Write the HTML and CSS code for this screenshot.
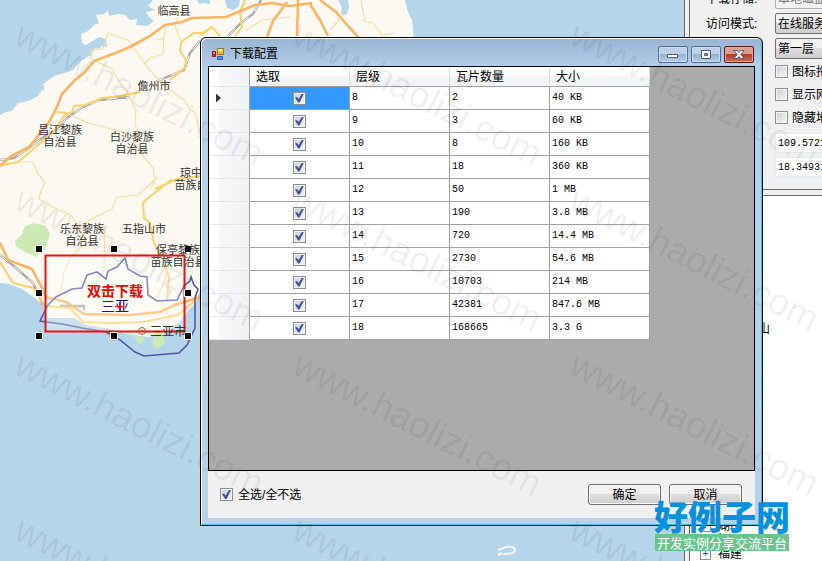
FILE: index.html
```html
<!DOCTYPE html>
<html lang="zh-CN">
<head>
<meta charset="utf-8">
<title>下载配置</title>
<link rel="stylesheet" href="styles.css">
</head>
<body>
<div class="app">
  <main class="map">
    <svg class="terrain" viewBox="0 0 684 561" preserveAspectRatio="xMinYMin slice" aria-hidden="true">
      <path fill="#fcf9f2" d="M0 115L6 112 12 111 18 103 28 101 38 96 42 90 43 84 54 76 65 73 73 70 80 62 92 54 96 45 107 47 106 39 99 37 91 42 86 45 82 43 81 34 88 31 94 25 99 23 96 15 104 14 108 10 109 16 118 14 125 15 130 20 137 19 136 25 147 26 154 21 149 17 146 12 155 10 148 6 153 0H405L408 12 412 20 414 40 410 120 260 290 200 290 196 302 188 311 181 320 167 333 148 337 126 334 112 329 85 325 75 318 47 318 44 306 36 299 22 289 9 284 0 283Z"/>
      <g fill="#b4d5ea">
        <path d="M197 0l2 4 5-1 6 1V0zM225 0l2 8 7 2 5-4 1-6zM338 0l4 7-1 7 5 1 3-7-1-8zM86 46l6-5 4-1 8 4-5 5zM40 88l4-3v6z"/>
      </g>
      <path fill="#cde9b6" d="M15 241l7-7 3-8 9-3 12 3 4 8-4 14-6 5-4 4-11-5-9-6z"/>
      <path fill="#cde9b6" d="M133 337l9-1 3 4-5 4zM153 340l3-10 6 1 3 12-8 6-5-4zM166 290l4-2 2 5-4 3z"/>
      <g fill="none" stroke="#aaa" stroke-width="2.400">
        <path d="M0 160L14 158 26 150 39 140 57 129 67 118 81 108 99 100 130 97M155 82l17-7 12-5 6-17 10-12M228 36l14-14 11-8 8-14M0 255l15 12 18 16 10 22M60 306h24v4"/>
        <path stroke="#fff" stroke-width="1" stroke-dasharray="10 8" d="M0 160L14 158 26 150 39 140 57 129 67 118 81 108 99 100 130 97M155 82l17-7 12-5 6-17 10-12M228 36l14-14 11-8 8-14M0 255l15 12 18 16 10 22"/>
      </g>
      <g fill="none" stroke="#f8dda0" stroke-width="1.200">
        <path d="M91 59V50l12-1 5-16 20 7 17 24 17 20 15 11 8 6 5 8 6 5 3 17 12 12M92 59l20 10 8 14 9 11 4 12 3 4-1 14 2 7-8 22M70 115l18 8 20 5 22 6 13 22 10 12 2 12-5 9M164 36l-1 18-13 4-6 6M166 25l-2 14-8 1M178 18l-3 8 5 14M21 162l12 0 5 12 7 8-4 9-2 8 16 9 16 7 6 10 7 11 1 8-14 12-7 16-4 27M76 229l17-11 19-9 5-12 21-2 11-10 9-8M105 225l-1 44-11 18 15 24M163 254l3 22-8 20 14 25M330 30l14-16M361 0l4 22 7 0 10 13 12-2M246 30l16-10 28-3"/>
      </g>
      <g fill="none" stroke="#fcd06a" stroke-width="2">
        <path d="M3 165l15-3 12-10 24-21 10-15 8-4 2-6 11-1 17-7 18-2 20-4M57 112l10 1M210 29l-7 4-9 0-13 9-1 9 6 9-1 8-15 12M155 189l20-9 9-2 26-3M172 179l-15 12-10 8-4 4 1 15 6 5 4 20 10 20 5 14-2 23M0 262l13 21 20 5 12 18 25 2 13 14 30 1 30-1 35-7 20-17M200 35l12-8 8 9M245 0l-5 12 2 15-7 9"/>
      </g>
      <g fill="none" stroke="#fbb463" stroke-width="2.600">
        <path d="M0 166L11 156 29 147 37 137 49 122 57 107 62 94 75 80 84 73 94 61 113 54 130 47 150 36 165 25 182 22 192 18 226 17 255 5 272 3 290 6 312 3M320 0l16 12 12 14 11 12M298 0l-1 36M287 2l-14 19-6 16M310 4l10 16 8 16M0 243l8 17 24 9 9 17 5 11 20 5 18 12 46 1 30-3 15-7 25-8"/>
      </g>
      <path fill="none" stroke="#5258a4" stroke-width="1.600" d="M40 321l8-16 8-8 16-8 10-1 5-13 10-3 9 7 2-8 9-4 8-9 3 11 12 7 7 1 1 18 9 6 20-1 4-8 3-6 6-5 1-4 3 8 4 4-3 9v30l-8 17-8 8-35 3-9-4-15-12-14-8-24-4-20-4z"/>
      <path fill="none" stroke="#f7f6f0" stroke-width="2" d="M498 550l8-3q9-1 9 3t-12 4M498 555l4-2"/>
      <path fill="#fff" fill-opacity=".3" stroke="#e11" stroke-width="2" d="M45.500 255.500h139v76h-139z"/>
      <g fill="none" stroke="#a65b28"><circle cx="142" cy="331" r="3.500"/><circle cx="142" cy="331" r="1"/></g>
      <g fill="#000" stroke="#fff">
        <path d="M35.500 245.500h7v7h-7zM110.500 245.500h7v7h-7zM184.500 245.500h7v7h-7zM35.500 289.500h7v7h-7zM184.500 289.500h7v7h-7zM35.500 332.500h7v7h-7zM110.500 332.500h7v7h-7zM184.500 332.500h7v7h-7z"/>
      </g>
    </svg>
    <span class="place lingao">临高县</span>
    <span class="place danzhou">儋州市</span>
    <span class="place changjiang">昌江黎族<br>自治县</span>
    <span class="place baisha">白沙黎族<br>自治县</span>
    <span class="place qiongzhong">琼中黎族<br>苗族自治县</span>
    <span class="place ledong">乐东黎族<br>自治县</span>
    <span class="place wuzhishan">五指山市</span>
    <span class="place baoting">保亭黎族<br>苗族自治县</span>
    <span class="place sanya">三亚市</span>
    <span class="place area"><b>双击下载</b><br>三亚</span>
    <svg class="cross" width="9" height="9" viewBox="0 0 9 9" aria-hidden="true"><path d="M0 4.500h9M4.500 0v9" stroke="#e11"/></svg>
  </main>

  <aside class="side">
    <form class="options">
      <label for="store">下载存储:</label>
      <select id="store" disabled><option>本地磁盘</option></select>
      <label for="mode">访问模式:</label>
      <select id="mode"><option>在线服务</option></select>
      <div class="stack">
        <select aria-label="层"><option>第一层</option></select>
        <label class="check"><input type="checkbox">图标拖动</label>
        <label class="check"><input type="checkbox">显示网格</label>
        <label class="check"><input type="checkbox">隐藏地名</label>
        <input class="coord" type="text" aria-label="经度" value="109.5721">
        <input class="coord" type="text" aria-label="纬度" value="18.34931">
      </div>
    </form>
    <ul class="tree">
      <li class="leaf">中山</li>
      <li class="branch first">湖南</li>
      <li class="branch">江西</li>
      <li class="branch">福建</li>
    </ul>
  </aside>
</div>

<section class="dialog" role="dialog" aria-labelledby="dialog-title">
  <header class="titlebar">
    <svg width="14" height="14" viewBox="0 0 14 14" aria-hidden="true">
      <path fill="#f5bd26" stroke="#94700e" d="M6.500 1.500h6v6h-6z"/><path fill="#ffeb8c" d="M7 2h5v2H7z"/>
      <path fill="#d22b20" stroke="#8e1712" d="M1.500 4.500h3v5h-3z"/><path fill="#ef8378" d="M2 5h2v2H2z"/>
      <path fill="#5894ed" stroke="#2c5db5" d="M6.500 9.500h5v3h-5z"/>
    </svg>
    <h1 id="dialog-title">下载配置</h1>
    <button class="win" aria-label="最小化"><svg width="12" height="9" viewBox="0 0 12 9"><path fill="#fff" stroke="#555d70" d="M.5 4.500h10v3H.5z"/></svg></button>
    <button class="win" aria-label="最大化"><svg width="12" height="9" viewBox="0 0 12 9"><path fill="#fff" stroke="#555d70" d="M1.500.5h9v8h-9z"/><path fill="#8ea9cb" stroke="#555d70" d="M4.500 3.500h3v2h-3z"/></svg></button>
    <button class="win close" aria-label="关闭"><svg width="12" height="9" viewBox="0 0 12 9"><path fill="#fff" stroke="#555d70" d="M.8.5h3.400L6 2.500 7.800.5h3.400L7.900 4.500l3.300 4H7.800L6 6.500l-1.800 2H.8l3.300-4z"/></svg></button>
  </header>
  <div class="grid">
    <table>
      <thead><tr><th class="rowhead"></th><th>选取</th><th>层级</th><th>瓦片数量</th><th>大小</th></tr></thead>
      <tbody>
        <tr class="current"><th class="rowhead"></th><td><input type="checkbox" checked aria-label="8"></td><td>8</td><td>2</td><td>40 KB</td></tr>
        <tr><th class="rowhead"></th><td><input type="checkbox" checked aria-label="9"></td><td>9</td><td>3</td><td>60 KB</td></tr>
        <tr><th class="rowhead"></th><td><input type="checkbox" checked aria-label="10"></td><td>10</td><td>8</td><td>160 KB</td></tr>
        <tr><th class="rowhead"></th><td><input type="checkbox" checked aria-label="11"></td><td>11</td><td>18</td><td>360 KB</td></tr>
        <tr><th class="rowhead"></th><td><input type="checkbox" checked aria-label="12"></td><td>12</td><td>50</td><td>1 MB</td></tr>
        <tr><th class="rowhead"></th><td><input type="checkbox" checked aria-label="13"></td><td>13</td><td>190</td><td>3.8 MB</td></tr>
        <tr><th class="rowhead"></th><td><input type="checkbox" checked aria-label="14"></td><td>14</td><td>720</td><td>14.4 MB</td></tr>
        <tr><th class="rowhead"></th><td><input type="checkbox" checked aria-label="15"></td><td>15</td><td>2730</td><td>54.6 MB</td></tr>
        <tr><th class="rowhead"></th><td><input type="checkbox" checked aria-label="16"></td><td>16</td><td>10703</td><td>214 MB</td></tr>
        <tr><th class="rowhead"></th><td><input type="checkbox" checked aria-label="17"></td><td>17</td><td>42381</td><td>847.6 MB</td></tr>
        <tr><th class="rowhead"></th><td><input type="checkbox" checked aria-label="18"></td><td>18</td><td>168665</td><td>3.3 G</td></tr>
      </tbody>
    </table>
  </div>
  <footer class="actions">
    <label class="check"><input type="checkbox" checked>全选/全不选</label>
    <button class="push">确定</button>
    <button class="push">取消</button>
  </footer>
</section>

<svg class="watermark" aria-hidden="true">
  <g id="row">
    <text transform="translate(-265 43) rotate(27)">www.haolizi.com</text>
    <text transform="translate(12 43) rotate(27)">www.haolizi.com</text>
    <text transform="translate(290 43) rotate(27)">www.haolizi.com</text>
    <text transform="translate(567 43) rotate(27)">www.haolizi.com</text>
  </g>
  <use href="#row" y="165"/>
  <use href="#row" y="330"/>
  <use href="#row" y="495"/>
</svg>

<div class="brand">
  <strong>好例子网</strong>
  <span>开发实例分享交流平台</span>
</div>
</body>
</html>
```
FILE: styles.css
```css
* { box-sizing: border-box; }

body {
  margin: 0;
  height: 100vh;
  overflow: hidden;
  position: relative;
  background: #b4d5ea;
  color: #000;
  font: 12px/14px "Liberation Sans", "Noto Sans CJK SC", sans-serif;
}

button, input, select { font: inherit; color: inherit; margin: 0; }

.app {
  display: grid;
  grid-template-columns: minmax(0, 1fr) 138px;
  height: 100%;
}

/* Map */
.map { position: relative; overflow: hidden; }
.terrain { display: block; width: 100%; height: 100%; }

.place {
  position: absolute;
  transform: translate(-50%, -50%);
  white-space: nowrap;
  text-align: center;
  color: #333;
  font-size: 11px;
  line-height: 12px;
}
.lingao { left: 174px; top: 11px; }
.danzhou { left: 154px; top: 86px; }
.changjiang { left: 60px; top: 136px; }
.baisha { left: 132px; top: 143px; }
.qiongzhong { left: 202px; top: 179px; }
.ledong { left: 82px; top: 235px; }
.wuzhishan { left: 144px; top: 229px; }
.baoting { left: 178px; top: 256px; }
.sanya { left: 168px; top: 332px; font-size: 12px; }
.area { left: 115px; top: 299px; font-size: 14px; line-height: 15px; color: #191970; }
.area b { color: #f00000; }
.cross { position: absolute; left: 115px; top: 302px; }

/* Side panel */
.side {
  display: flex;
  flex-direction: column;
  overflow: hidden;
  background: #f0f0f0;
  border-left: 1px solid #696969;
  padding-left: 4px;
}
.options {
  display: grid;
  grid-template-columns: 69px 110px;
  row-gap: 4px;
  align-items: center;
  margin-top: -12px;
  padding: 0 0 12px 16px;
  border: solid #696969;
  border-width: 0 0 1px 1px;
}
.options select {
  height: 21px;
  width: 110px;
  padding: 0 2px;
  appearance: none;
  border: 1px solid #707070;
  border-radius: 2px;
  background: linear-gradient(#f2f2f2 45%, #dcdcdc 50%, #cfcfcf);
}
.options select:disabled { color: #777; background: #f4f4f4; border-color: #adb2b5; opacity: 1; }
.stack { grid-column: 2; display: flex; flex-direction: column; }
.stack .check { height: 23px; gap: 4px; }
.stack select { margin-bottom: 1px; }
.coord {
  width: 110px;
  height: 20px;
  margin-top: 4px;
  padding: 0 2px;
  border: 1px solid #e3e9ef;
  background: #fff;
  font: 10px/14px "Liberation Mono", monospace;
}

.check { display: flex; align-items: center; gap: 5px; white-space: nowrap; }
input[type="checkbox"] {
  appearance: none;
  flex: none;
  display: block;
  width: 13px;
  height: 13px;
  border: 1px solid #8e8f8f;
  background: linear-gradient(135deg, #cbcfd5, #f6f6f6);
  box-shadow: inset 0 0 0 1px #f4f4f4;
}
input[type="checkbox"]:checked::before {
  content: "";
  display: block;
  width: 9px;
  height: 9px;
  margin: 1px;
  background: #4053a0;
  clip-path: polygon(0 45%, 22% 40%, 40% 62%, 78% 0, 100% 0, 50% 100%, 35% 100%);
}

.tree {
  flex: 1;
  display: flex;
  flex-direction: column;
  list-style: none;
  margin: 5px 0 0;
  padding: 0 0 0 10px;
  background: #fff;
  border: solid #696969;
  border-width: 1px 0 0 1px;
}
.leaf { margin-top: 126px; padding-left: 46px; }
.branch { display: flex; align-items: center; gap: 7px; }
.branch.first { margin-top: auto; }
.branch::before {
  content: "+";
  width: 9px;
  height: 9px;
  border: 1px solid #919191;
  color: #26438f;
  font-size: 10px;
  line-height: 7px;
  text-align: center;
}

/* Dialog */
.dialog {
  position: absolute;
  inset: 37px 59px 35px 200px;
  display: flex;
  flex-direction: column;
  padding: 0 7px 7px;
  border: 1px solid #000;
  border-radius: 6px 6px 0 0;
  background: linear-gradient(#98b4d2, #b5cfec 30px, #b9d1ea);
  box-shadow: inset 1px 1px #fff, inset -1px -1px #25cfe8;
}
.titlebar { display: flex; align-items: center; gap: 3px; height: 28px; padding: 4px 1px 0 3px; }
.titlebar h1 { flex: 1; margin: 0 0 0 2px; font-size: 12px; font-weight: 400; }
.win {
  display: flex;
  align-items: center;
  justify-content: center;
  width: 30px;
  height: 17px;
  padding: 0;
  border: 1px solid #586e91;
  border-radius: 2px;
  background: linear-gradient(#bcd0e8 45%, #94b1d2 50%, #b4d0eb);
  box-shadow: inset 0 0 0 1px #c9dcf0;
}
.close { background: linear-gradient(#dc9c8e 45%, #b83c28 50%, #ce6a50); border-color: #571d1d; box-shadow: inset 0 0 0 1px #e2a497; }

.grid { flex: 1; min-height: 0; overflow: hidden; border: 1px solid #000; background: #ababab; }
table { width: 441px; table-layout: fixed; border-collapse: separate; border-spacing: 0; }
th, td {
  height: 23px;
  padding: 0 2px;
  border: solid #a0a0a0;
  border-width: 0 1px 1px 0;
  background: #fff;
  text-align: left;
  font-weight: 400;
}
td { font: 10px/14px "Liberation Mono", monospace; }
td input[type="checkbox"] { margin: 0 auto; }
thead th { height: 20px; padding: 0 6px; border-right-color: #dedfe1; background: linear-gradient(#fff 45%, #f4f5f7 50%, #f1f2f4); }
.rowhead { width: 41px; border-bottom-color: #e4e5e8; background: linear-gradient(90deg, #fff 25%, #f6f7f9 25%, #f1f2f5); }
thead .rowhead, .rowhead { border-right-color: #a0a0a0; }
.current td:nth-child(2) { background: #3399ff; }
.current .rowhead::before {
  content: "";
  display: block;
  width: 5px;
  height: 9px;
  margin-left: 5px;
  background: #333;
  clip-path: polygon(0 0, 100% 50%, 0 100%);
}

.actions { display: flex; align-items: center; gap: 8px; height: 47px; padding: 0 13px 0 12px; background: #f0f0f0; }
.actions .check { flex: 1; }
.push {
  width: 73px;
  height: 21px;
  padding: 0;
  border: 1px solid #707070;
  border-radius: 3px;
  background: linear-gradient(#f2f2f2 45%, #dddddd 50%, #cfcfcf);
  box-shadow: inset 0 0 0 1px #fafafa;
}

/* Overlays */
.watermark { position: absolute; inset: 0; width: 100%; height: 100%; overflow: hidden; pointer-events: none; }
.watermark text { font: 37px "Liberation Sans", sans-serif; fill: #000; fill-opacity: .065; }

.brand {
  position: absolute;
  right: 32px;
  bottom: 10px;
  display: flex;
  flex-direction: column;
  align-items: center;
  font-family: "Noto Sans CJK SC", sans-serif;
  white-space: nowrap;
}
.brand strong { color: #0a8fdc; font-size: 34px; line-height: 36px; font-weight: 900; }
.brand span { padding: 0 2px; background: #6dc390; color: #fff; font-size: 13px; line-height: 17px; }
```
